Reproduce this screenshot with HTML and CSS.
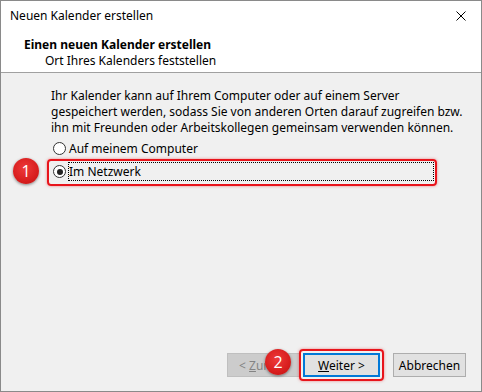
FILE: index.html
```html
<!DOCTYPE html>
<html lang="de">
<head>
    <meta charset="UTF-8" />
    <title>Neuen Kalender erstellen</title>
    <link rel="stylesheet" href="styles.css">
</head>
<body>
    <div class="window">
        <div class="titlebar">
            <span class="title">Neuen Kalender erstellen</span>
            <svg class="close" width="10" height="10" viewBox="0 0 10 10">
                <path d="M0.5 0.5 L9.5 9.5 M9.5 0.5 L0.5 9.5" stroke="#000" stroke-width="1" />
            </svg>
        </div>
        <div class="header">
            <div class="header-title">Einen neuen Kalender erstellen</div>
            <div class="header-sub">Ort Ihres Kalenders feststellen</div>
        </div>
        <div class="content">
            <p class="intro">Ihr Kalender kann auf Ihrem Computer oder auf einem Server<br>gespeichert werden, sodass Sie von anderen Orten darauf zugreifen bzw.<br>ihn mit Freunden oder Arbeitskollegen gemeinsam verwenden können.</p>
            <div class="option">
                <span class="radio"></span>
                <span class="label">Auf meinem Computer</span>
            </div>
            <div class="option selected">
                <span class="radio checked"></span>
                <span class="label focus">Im Netzwerk</span>
                <span class="highlight"></span>
                <span class="badge badge-one">1</span>
            </div>
        </div>
        <div class="footer">
            <button class="btn disabled"><span>&lt; <u>Z</u>urück</span></button>
            <div class="next-wrap">
                <span class="badge badge-two">2</span>
                <button class="btn primary"><u>W</u>eiter &gt;</button>
                <span class="highlight"></span>
            </div>
            <button class="btn">Abbrechen</button>
        </div>
    </div>
</body>
</html>
```

FILE: styles.css
```css
body {
    margin: 0;
    padding: 0;
    font-family: "Noto Sans", "Open Sans", sans-serif;
    font-size: 12px;
    color: #000;
}
.window {
    width: 482px;
    height: 392px;
    box-sizing: border-box;
    border: 1px solid #8a8a8a;
    display: flex;
    flex-direction: column;
    background-color: #f0f0f0;
}
.titlebar {
    height: 30px;
    background-color: #fff;
    display: flex;
    align-items: center;
    justify-content: space-between;
    padding: 0 15px 0 9px;
}
.title {
    line-height: 16px;
}
.header {
    background-color: #fff;
    height: 42px;
    box-sizing: border-box;
    border-bottom: 1px solid #a0a0a0;
    padding: 5px 0 0 23px;
}
.header-title {
    font-weight: bold;
    line-height: 17px;
}
.header-sub {
    padding-left: 21px;
    line-height: 16px;
}
.content {
    flex: 1;
    padding: 15px 0 0 50px;
}
.intro {
    margin: 0 0 1px 0;
    line-height: 16px;
}
.option {
    position: relative;
    display: flex;
    align-items: center;
    height: 23px;
    margin-left: 2px;
}
.radio {
    width: 13px;
    height: 13px;
    border: 1px solid #333;
    border-radius: 50%;
    background-color: #fff;
    box-sizing: border-box;
    margin-right: 2px;
    position: relative;
    flex-shrink: 0;
}
.radio.checked::after {
    content: "";
    position: absolute;
    left: 2.5px;
    top: 2.5px;
    width: 6px;
    height: 6px;
    border-radius: 50%;
    background-color: #222;
}
.label {
    line-height: 17px;
    border: 1px solid transparent;
}
.label.focus {
    border: 1px dotted #000;
    width: 364px;
}
.highlight {
    position: absolute;
    border: 2px solid #e8141b;
    border-radius: 4px;
    box-shadow: 0 0 3px rgba(232, 20, 27, 0.5);
    pointer-events: none;
}
.option .highlight {
    left: -6px;
    right: 44px;
    top: -1px;
    bottom: -3px;
}
.badge {
    position: absolute;
    width: 26px;
    height: 26px;
    border-radius: 50%;
    background: radial-gradient(circle at 45% 40%, #ee3a3a 0%, #d81e1e 60%, #b81414 100%);
    box-shadow: 0 1px 3px rgba(0, 0, 0, 0.45);
    color: #fff;
    font-family: "Open Sans", sans-serif;
    font-size: 16px;
    display: flex;
    align-items: center;
    justify-content: center;
}
.badge-one {
    left: -40px;
    top: -2px;
}
.footer {
    display: flex;
    justify-content: flex-end;
    align-items: center;
    padding: 0 15px 14px 0;
}
.btn {
    width: 73px;
    height: 24px;
    background-color: #e1e1e1;
    border: 1px solid #adadad;
    font-family: inherit;
    font-size: 12px;
    color: #000;
    padding: 0;
}
.btn.disabled {
    background-color: #cccccc;
    border-color: #bfbfbf;
    color: #838383;
}
.next-wrap {
    position: relative;
    margin: 0 13px 0 3px;
}
.btn.primary {
    width: 77px;
    border: 2px solid #0078d7;
    display: block;
}
.next-wrap .highlight {
    left: -4px;
    right: -4px;
    top: -4px;
    bottom: -4px;
}
.badge-two {
    left: -38px;
    top: -4px;
    z-index: 1;
}
```
